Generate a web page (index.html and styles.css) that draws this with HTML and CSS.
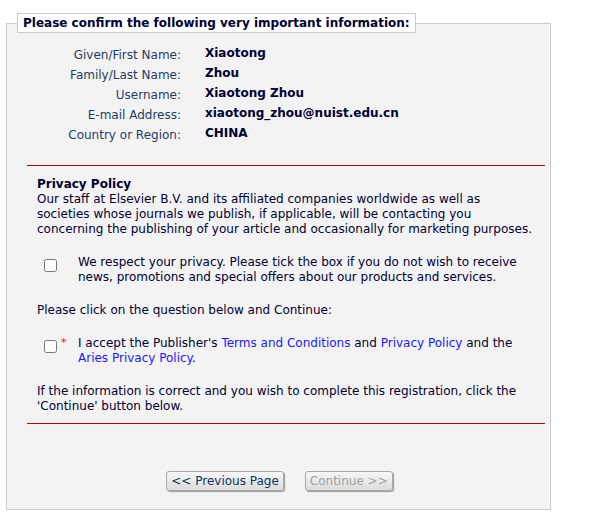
FILE: index.html
```html
<!DOCTYPE html>
<html>
<head>
<meta charset="utf-8">
<link rel="stylesheet" href="styles.css">
</head>
<body>
<fieldset class="confirm">
  <legend class="confirm-legend">Please confirm the following very important information:</legend>
  <div class="info">
    <div class="lbl">Given/First Name:</div><div class="val">Xiaotong</div>
    <div class="lbl">Family/Last Name:</div><div class="val">Zhou</div>
    <div class="lbl">Username:</div><div class="val">Xiaotong Zhou</div>
    <div class="lbl">E-mail Address:</div><div class="val">xiaotong_zhou@nuist.edu.cn</div>
    <div class="lbl">Country or Region:</div><div class="val">CHINA</div>
  </div>
  <hr class="rule rule-top">
  <div class="section">
    <div class="heading">Privacy Policy</div>
    <p class="para para-first">Our staff at Elsevier B.V. and its affiliated companies worldwide as well as societies whose journals we publish, if applicable, will be contacting you concerning the publishing of your article and occasionally for marketing purposes.</p>
    <div class="check-row">
      <div class="check-cell"><input type="checkbox" class="cb"></div>
      <div class="check-text">We respect your privacy. Please tick the box if you do not wish to receive news, promotions and special offers about our products and services.</div>
    </div>
    <p class="para">Please click on the question below and Continue:</p>
    <div class="check-row">
      <div class="check-cell"><input type="checkbox" class="cb"><span class="req">*</span></div>
      <div class="check-text">I accept the Publisher's <a class="lnk" href="#">Terms and Conditions</a> and <a class="lnk" href="#">Privacy Policy</a> and the <a class="lnk" href="#">Aries Privacy Policy</a>.</div>
    </div>
    <p class="para">If the information is correct and you wish to complete this registration, click the 'Continue' button below.</p>
  </div>
  <hr class="rule rule-bottom">
  <div class="buttons">
    <button class="btn" type="button">&lt;&lt; Previous Page</button>
    <button class="btn btn-disabled" type="button" disabled>Continue &gt;&gt;</button>
  </div>
</fieldset>
</body>
</html>
```
FILE: styles.css
```css
html, body {
  margin: 0;
  padding: 0;
  background: #fff;
}
body {
  padding-top: 13px;
  font-family: "DejaVu Sans", Verdana, sans-serif;
  font-size: 12px;
  color: #000033;
}
.confirm {
  margin: 0 0 0 6px;
  width: 545px;
  box-sizing: border-box;
  height: 497px;
  border: 1px solid #cccccc;
  background: #f3f3f3;
  padding: 0;
  min-inline-size: 0;
}
.confirm-legend {
  margin-left: 10px;
  padding: 0 5px;
  height: 20px;
  box-sizing: border-box;
  line-height: 18px;
  border: 1px solid #cccccc;
  background: #fff;
  font-weight: bold;
  font-size: 12px;
  color: #000033;
}
.info {
  display: grid;
  grid-template-columns: 174px auto;
  column-gap: 24px;
  margin-top: 12px;
  grid-auto-rows: 20px;
  align-items: center;
}
.lbl {
  text-align: right;
  color: #1f3d63;
}
.val {
  font-weight: bold;
  color: #000033;
  position: relative;
  top: -2px;
}
.rule {
  border: 0;
  height: 1px;
  background: #c00000;
  margin: 0 5px 0 20px;
}
.rule-top {
  margin-top: 20px;
}
.section {
  padding: 11px 15px 0 30px;
  line-height: 15px;
  font-size: 12px;
}
.heading {
  font-weight: bold;
  line-height: 15px;
}
.para {
  margin: 0 0 18px 0;
}
.para-first {
  margin-bottom: 18px;
}
.check-row {
  display: flex;
  margin: 0 0 18px 0;
}
.check-cell {
  width: 41px;
  flex: none;
  position: relative;
}
.cb {
  margin: 4px 0 0 7px;
  width: 13px;
  height: 13px;
}
.req {
  position: absolute;
  left: 24px;
  top: -1px;
  color: #ff0000;
  font-size: 11px;
}
.check-text {
  flex: 1;
}
.lnk {
  color: #1a1aff;
  text-decoration: none;
}
.rule-bottom {
  margin-top: -9px;
}
.buttons {
  display: flex;
  justify-content: center;
  gap: 21px;
  margin-top: 47px;
  padding-left: 2px;
}
.btn {
  font-family: "DejaVu Sans", Verdana, sans-serif;
  font-size: 12px;
  height: 20px;
  padding: 0 4px;
  border: 1px solid #a8a8a8;
  border-radius: 3px;
  background: linear-gradient(#f7f7f7, #dcdcdc);
  box-shadow: 1px 1px 1px #9a9a9a;
  color: #0b3563;
}
.btn-disabled {
  color: #a0a0a0;
}
```
